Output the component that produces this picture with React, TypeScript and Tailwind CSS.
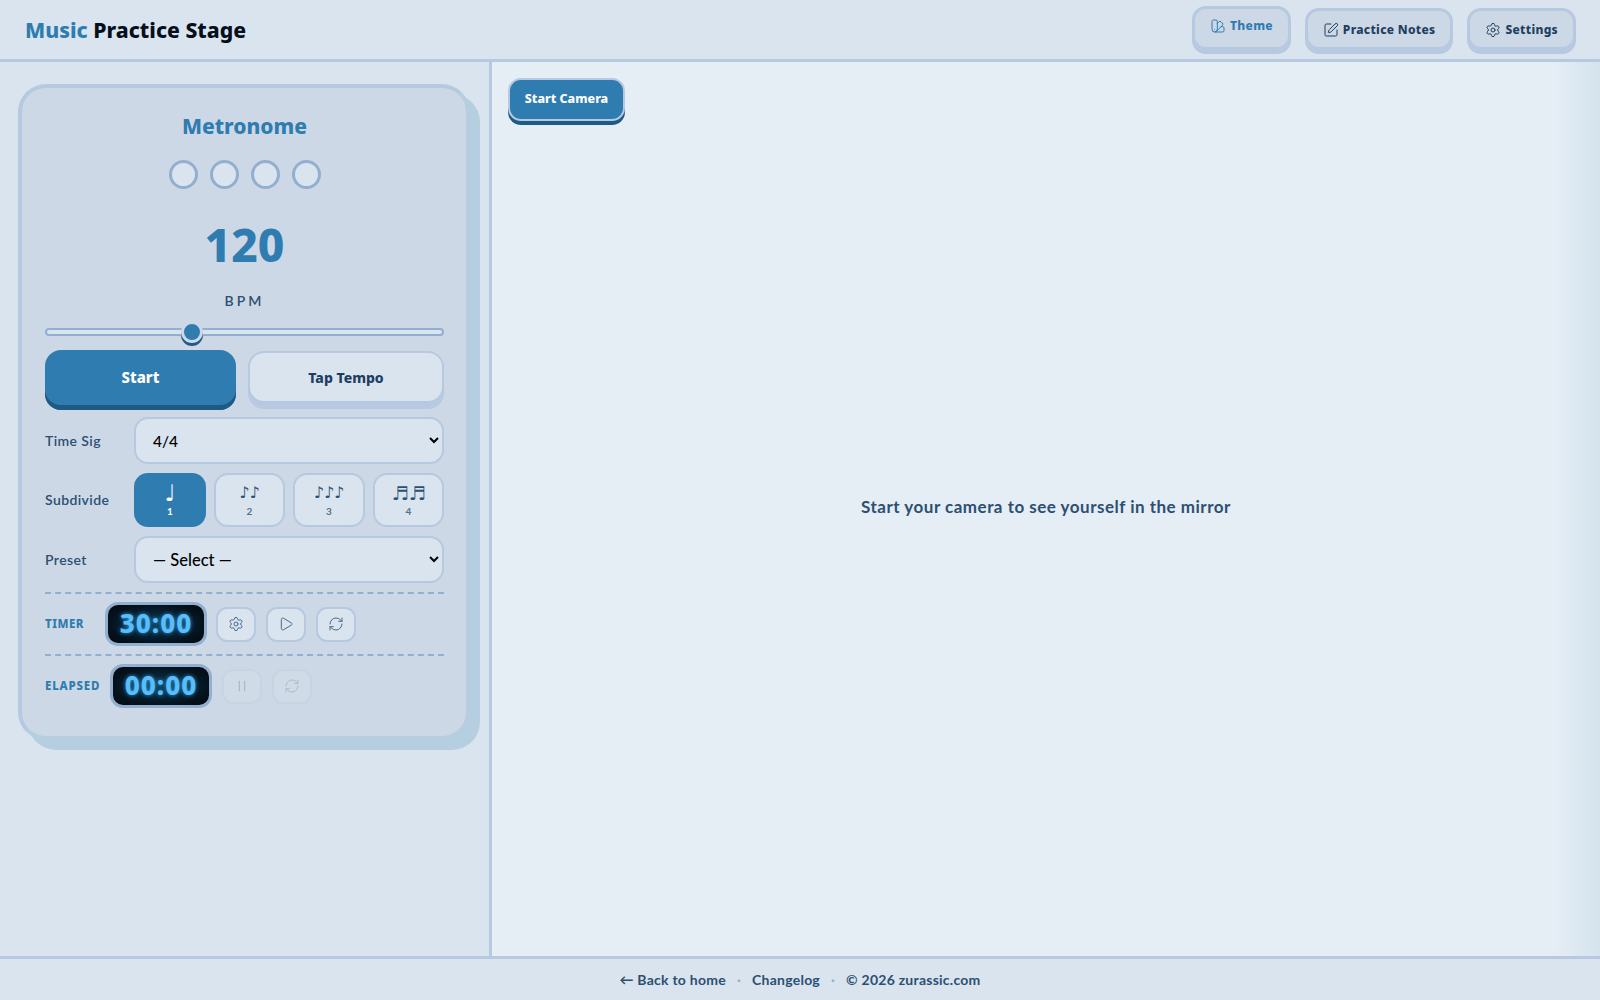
import { Play, RefreshCw, Settings, SquarePen, SwatchBook } from "lucide-react";

const heading = "font-['Noto_Sans',sans-serif] font-extrabold";
const subdivisions = [
  { glyph: "♩", label: "1", w: "w-[72px]", size: "text-[23px]" },
  { glyph: "♪♪", label: "2", w: "w-[71px]", size: "text-[16px]" },
  { glyph: "♪♪♪", label: "3", w: "w-[72px]", size: "text-[16px]" },
  { glyph: "♬♬", label: "4", w: "w-[71px]", size: "text-[19px]" },
];

function NavButton({ icon, label, active }: { icon: React.ReactNode; label: string; active?: boolean }) {
  return (
    <button
      className={`${heading} flex items-center gap-[4px] rounded-[14px] border-[3px] border-[#b6c9e0] bg-[#cdd8e6] px-[15px] text-[12px] tracking-[0.3px] shadow-[inset_0_-4px_0_#b6c9e0] ${active ? "h-[48px] pb-[8px] text-[#2f7cb0]" : "h-[46px] pb-[3px] text-[#1e3f5f]"}`}
    >
      {icon}
      {label}
    </button>
  );
}

function IconButton({ children, disabled }: { children: React.ReactNode; disabled?: boolean }) {
  return (
    <button
      disabled={disabled}
      className={`flex h-[35px] w-[40px] items-center justify-center rounded-[11px] border-[2px] border-[#b6c9e0] bg-[#d9e4ef] text-[#4a6a8a] ${disabled ? "opacity-25" : ""}`}
    >
      {children}
    </button>
  );
}

function Clock({ time }: { time: string }) {
  return (
    <div className={`${heading} flex h-[44px] w-[102px] items-center justify-center rounded-[13px] border-[3px] border-[#93afd0] bg-[radial-gradient(ellipse_at_center,#0b3a55_0%,#05121d_70%,#02080e_100%)] pb-[2px] text-[26px] leading-none tracking-[1px] text-[#58bdf8] [text-shadow:0_0_4px_#2f9ae0]`}>
      {time}
    </div>
  );
}

export default function App() {
  return (
    <div className="flex h-[1000px] w-[1600px] flex-col overflow-hidden bg-[#d9e4ef] font-['Lato','Open_Sans',sans-serif] text-[#1e3f5f]">
      <header className="flex h-[62px] shrink-0 items-center justify-between border-b-[3px] border-[#b6c9e0] bg-[#d9e4ef] pl-[25px] pr-[24px]">
        <h1 className={`${heading} text-[21.2px] text-[#05101c]`}>
          <span className="text-[#2f7cb0]">Music</span> Practice Stage
        </h1>
        <div className="flex items-end gap-[14px] self-end pb-[5px]">
          <NavButton active icon={<SwatchBook size={16} strokeWidth={1.5} />} label="Theme" />
          <NavButton icon={<SquarePen size={16} strokeWidth={1.5} />} label="Practice Notes" />
          <NavButton icon={<Settings size={16} strokeWidth={1.5} />} label="Settings" />
        </div>
      </header>

      <div className="flex min-h-0 flex-1">
        <aside className="w-[492px] shrink-0 border-r-[3px] border-[#b6c9e0] bg-[#d9e4ef] pl-[18px] pt-[22px]">
          <section className="h-[656px] w-[452px] rounded-[28px] border-[4px] border-[#b6c9e0] border-b-[#b6cfe0] border-r-[#b6cfe0] bg-[#cdd8e6] pl-[23px] pr-[22px] pt-[20px] shadow-[10px_10px_0_#b6cfe0]">
            <h2 className={`${heading} text-center text-[21px] leading-[36px] text-[#2f7cb0]`}>Metronome</h2>
            <div className="mt-[16px] flex justify-center gap-[12px]">
              {[0, 1, 2, 3].map((i) => (
                <span key={i} className="h-[29px] w-[29px] rounded-full border-[3px] border-[#93afd0] bg-[#d9e4ef]" />
              ))}
            </div>
            <div className={`${heading} mt-[30px] text-center text-[46px] leading-[50px] text-[#2f7cb0]`}>120</div>
            <div className="mt-[22px] text-center text-[14px] font-semibold leading-[20px] tracking-[3px] text-[#2c4f72]">BPM</div>
            <input
              type="range"
              min={30}
              max={280}
              defaultValue={120}
              className="mt-[17px] block h-[8px] w-full appearance-none rounded-full border-[2px] border-[#93afd0] bg-[#d9e4ef] [&::-webkit-slider-thumb]:h-[22px] [&::-webkit-slider-thumb]:w-[22px] [&::-webkit-slider-thumb]:appearance-none [&::-webkit-slider-thumb]:rounded-full [&::-webkit-slider-thumb]:border-[3px] [&::-webkit-slider-thumb]:border-[#cdd8e6] [&::-webkit-slider-thumb]:bg-[#2f7cb0] [&::-webkit-slider-thumb]:shadow-[0_3px_0_#1f5a85]"
            />
            <div className="mt-[14px] flex items-start gap-[12px]">
              <button className={`${heading} h-[60px] w-[191px] rounded-[16px] bg-[#2f7cb0] pb-[5px] text-[15px] text-white shadow-[inset_0_-5px_0_#1f5a85]`}>
                Start
              </button>
              <button className={`${heading} mt-[1px] h-[58px] w-[196px] rounded-[16px] border-[2px] border-[#b6c9e0] bg-[#d9e4ef] pb-[5px] text-[14px] text-[#1e3f5f] shadow-[inset_0_-6px_0_#b6c9e0]`}>
                Tap Tempo
              </button>
            </div>

            <div className="mt-[7px] flex items-center">
              <label className="w-[89px] text-[14px] font-semibold tracking-[0.4px] text-[#2c4f72]">Time Sig</label>
              <select className="h-[47px] flex-1 rounded-[14px] border-[2px] border-[#b6c9e0] bg-[#d9e4ef] pl-[13px] text-[15.5px] font-medium text-black">
                <option>4/4</option>
              </select>
            </div>

            <div className="mt-[9px] flex items-center">
              <label className="w-[89px] pb-[2px] text-[14px] font-semibold tracking-[0.4px] text-[#2c4f72]">Subdivide</label>
              <div className="flex flex-1 justify-between">
                {subdivisions.map((s, i) => (
                  <button
                    key={s.label}
                    className={`flex h-[54px] ${s.w} flex-col items-center justify-center rounded-[14px] ${i === 0 ? "bg-[#2f7cb0] text-white" : "border-[2px] border-[#b6c9e0] bg-[#d9e4ef] text-[#2c4f72]"}`}
                  >
                    <span className={`font-['DejaVu_Sans',sans-serif] ${s.size} leading-[22px]`}>{s.glyph}</span>
                    <span className={`text-[10px] font-bold leading-[14px] ${i === 0 ? "" : "text-[#55708c]"}`}>{s.label}</span>
                  </button>
                ))}
              </div>
            </div>

            <div className="mt-[9px] flex items-center">
              <label className="w-[89px] text-[14px] font-semibold tracking-[0.4px] text-[#2c4f72]">Preset</label>
              <select className="h-[47px] flex-1 rounded-[14px] border-[2px] border-[#b6c9e0] bg-[#d9e4ef] pl-[13px] text-[16.5px] font-medium text-black">
                <option>— Select —</option>
              </select>
            </div>

            <div className="mt-[9px] flex items-center gap-[10px] border-t-[2px] border-dashed border-[#93afd0] pt-[8px]">
              <span className={`${heading} w-[50px] text-[11.5px] tracking-[0.5px] text-[#2f7cb0]`}>TIMER</span>
              <Clock time="30:00" />
              <div className="-ml-[1px] flex gap-[10px]">
                <IconButton><Settings size={16} strokeWidth={1.5} /></IconButton>
                <IconButton><Play size={16} strokeWidth={1.5} /></IconButton>
                <IconButton><RefreshCw size={16} strokeWidth={1.5} /></IconButton>
              </div>
            </div>

            <div className="mt-[8px] flex items-center gap-[10px] border-t-[2px] border-dashed border-[#93afd0] pt-[8px]">
              <span className={`${heading} w-[55px] whitespace-nowrap text-[11.5px] tracking-[0.8px] text-[#2f7cb0]`}>ELAPSED</span>
              <Clock time="00:00" />
              <div className="flex gap-[10px]">
                <IconButton disabled>
                  <svg width="16" height="16" viewBox="0 0 24 24" fill="none" stroke="currentColor" strokeWidth="2" strokeLinecap="round">
                    <path d="M8 5v14M16 5v14" />
                  </svg>
                </IconButton>
                <IconButton disabled><RefreshCw size={16} strokeWidth={1.5} /></IconButton>
              </div>
            </div>
          </section>
        </aside>

        <main className="relative flex flex-1 items-center justify-center bg-[linear-gradient(90deg,#e5edf5_0%,#e5edf5_96%,#d3e3ed_100%)]">
          <button className={`${heading} absolute left-[16px] top-[16px] h-[43px] w-[117px] rounded-[13px] border-[2px] border-[#b6c9e0] bg-[#2f7cb0] text-[12.5px] text-white shadow-[0_4px_0_#1f5a85]`}>
            Start Camera
          </button>
          <p className="pb-[4px] text-[17px] font-bold tracking-[0.5px] text-[#2c4f72]">Start your camera to see yourself in the mirror</p>
        </main>
      </div>

      <footer className="flex h-[44px] shrink-0 items-center justify-center border-t-[3px] border-[#b6c9e0] bg-[#d9e4ef] text-[14px] font-bold tracking-[0.25px] text-[#2c4f72]">
        <a>← Back to home</a>
        <span className="mx-[11px] text-[#93afd0]">·</span>
        <a>Changelog</a>
        <span className="mx-[11px] text-[#93afd0]">·</span>
        <span>© 2026 zurassic.com</span>
      </footer>
    </div>
  );
}
